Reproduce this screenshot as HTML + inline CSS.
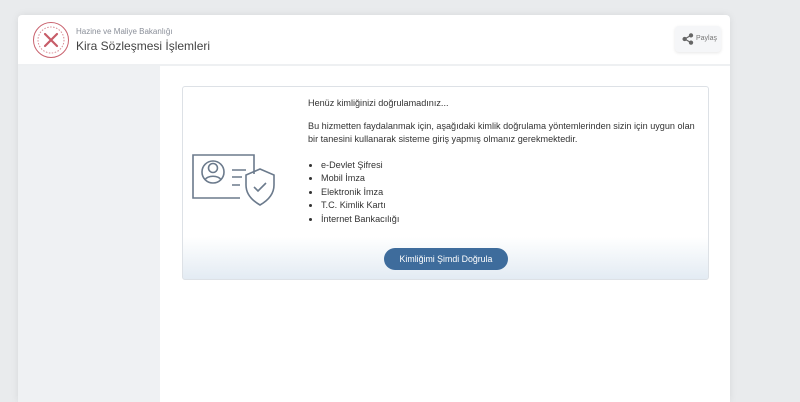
<!DOCTYPE html>
<html><head><meta charset="utf-8"><style>
html,body{margin:0;width:800px;height:402px;overflow:hidden}
body{background:#e9ebed;font-family:"Liberation Sans",sans-serif;position:relative}
.card{position:absolute;left:18px;top:15px;width:712px;height:387px;background:#fff;border-radius:4px 4px 0 0;box-shadow:0 0 8px rgba(0,0,0,.08);overflow:hidden}
.hdr{height:49px;border-bottom:2px solid #eef0f2;position:relative}
.side{position:absolute;left:0;top:51px;width:142px;height:340px;background:#eff1f3}
.t1{position:absolute;left:58px;top:12px;font-size:8px;color:#8a8f99}
.t2{position:absolute;left:58px;top:24px;font-size:12px;color:#444}
.share{position:absolute;left:657px;top:11px;width:46px;height:26px;border-radius:4px;background:#f5f6f8;box-shadow:0 1px 3px rgba(0,0,0,.1);font-size:7px;color:#777}
.box{position:absolute;left:182px;top:86px;width:525px;height:192px;border:1px solid #dde1e6;border-radius:3px;background:linear-gradient(#fff 0,#fff 150px,#e3ebf3 192px)}
.txt{position:absolute;left:125px;top:10px;font-size:9.1px;color:#333;line-height:13.5px}
.txt ul{margin:12px 0 0;padding-left:13px}
.btn{position:absolute;left:201px;top:161px;width:124px;height:22px;border-radius:11px;background:#3e6c9c;color:#fff;font-size:8.8px;text-align:center;line-height:22px}
</style></head><body>
<div class="card">
<div class="hdr">
<svg style="position:absolute;left:14px;top:6px" width="38" height="38" viewBox="0 0 38 38"><circle cx="19" cy="19" r="17.5" fill="none" stroke="#c9626e" stroke-width="1"/><circle cx="19" cy="19" r="13" fill="none" stroke="#d98a93" stroke-width="1" stroke-dasharray="1.5 1.5"/><path d="M13 13 L25 25 M25 13 L13 25" stroke="#c75c68" stroke-width="2.2" stroke-linecap="round"/></svg>
<div class="t1">Hazine ve Maliye Bakanlığı</div>
<div class="t2">Kira Sözleşmesi İşlemleri</div>
<div class="share"><svg style="position:absolute;left:7px;top:7px" width="12" height="12" viewBox="0 0 10 10"><circle cx="7.5" cy="2" r="1.8" fill="#666"/><circle cx="2.2" cy="5" r="1.8" fill="#666"/><circle cx="7.5" cy="8" r="1.8" fill="#666"/><path d="M7.5 2L2.2 5L7.5 8" stroke="#666" fill="none"/></svg><span style="position:absolute;left:21px;top:9px">Paylaş</span></div>
</div>
<div class="side"></div>
</div>
<div class="box">
<svg style="position:absolute;left:9px;top:65px" width="90" height="56" viewBox="0 0 90 56" fill="none" stroke="#6b7a8c" stroke-width="1.6"><path d="M62 22V3H1V46H48"/><circle cx="21" cy="20" r="11"/><circle cx="21" cy="16" r="4.5"/><path d="M13 28c2-5 14-5 16 0"/><path d="M40 18h14M40 25h10M40 33h8"/><path d="M68 17l-14 6v10c0 10 7 16 14 20c7-4 14-10 14-20V23z"/><path d="M62 35l4 4l8-8"/></svg>
<div class="txt"><div>Henüz kimliğinizi doğrulamadınız...</div><div style="margin-top:9px">Bu hizmetten faydalanmak için, aşağıdaki kimlik doğrulama yöntemlerinden sizin için uygun olan<br>bir tanesini kullanarak sisteme giriş yapmış olmanız gerekmektedir.</div>
<ul><li>e-Devlet Şifresi</li><li>Mobil İmza</li><li>Elektronik İmza</li><li>T.C. Kimlik Kartı</li><li>İnternet Bankacılığı</li></ul></div>
<div class="btn">Kimliğimi Şimdi Doğrula</div>
</div>
</body></html>
